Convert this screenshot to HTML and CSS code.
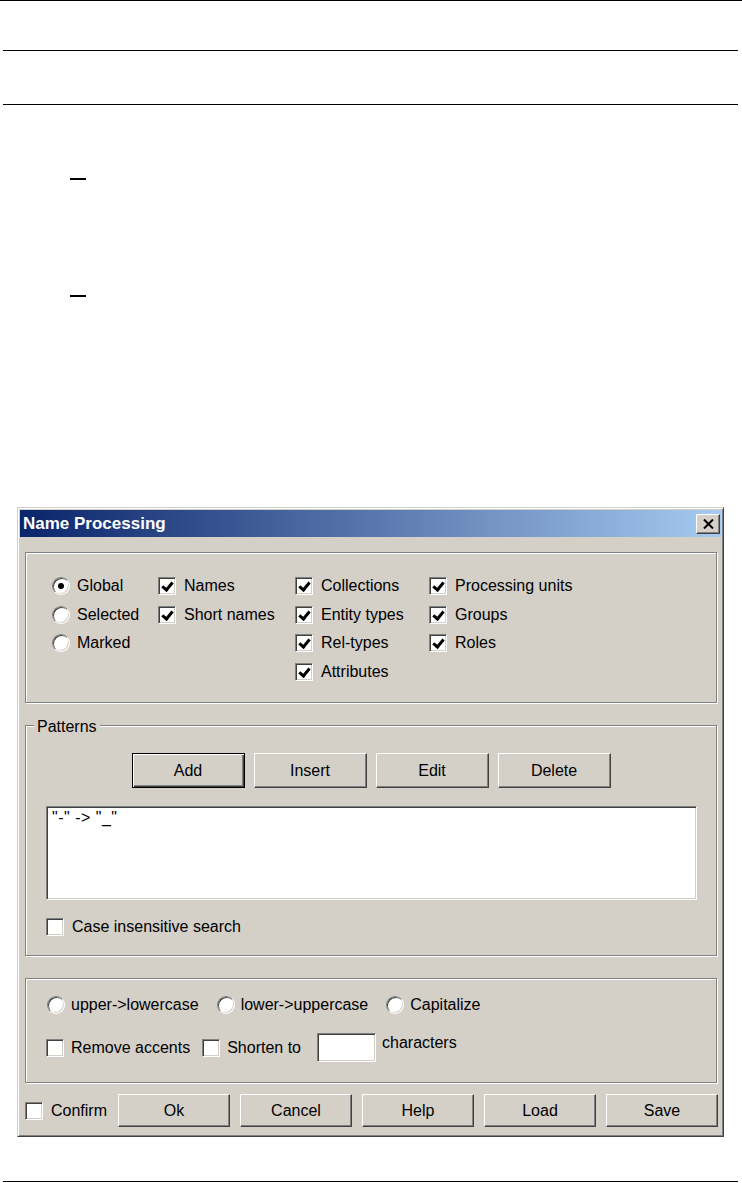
FILE: index.html
```html
<!DOCTYPE html>
<html lang="en">
<head>
  <meta charset="UTF-8" />
  <meta name="viewport" content="width=device-width, initial-scale=1.0" />
  <title>Name Processing</title>
  <link rel="stylesheet" href="styles.css">
</head>
<body>
<div class="rule full"></div>
<div class="rule r1"></div>
<div class="rule r2"></div>
<div class="mark m1"></div>
<div class="mark m2"></div>

<div class="dialog">
  <div class="titlebar">
    <span class="title">Name Processing</span>
    <span class="close">
      <svg width="11" height="10" viewBox="0 0 11 10"><path d="M1 0.5 L10 9.5 M10 0.5 L1 9.5" stroke="#000" stroke-width="2"/></svg>
    </span>
  </div>

  <div class="dlg-body">
    <div class="group scope">
      <div class="grid">
        <div class="opt"><span class="rb on"></span>Global</div>
        <div class="opt"><span class="cb on"></span>Names</div>
        <div class="opt"><span class="cb on"></span>Collections</div>
        <div class="opt"><span class="cb on"></span>Processing units</div>

        <div class="opt"><span class="rb"></span>Selected</div>
        <div class="opt"><span class="cb on"></span>Short names</div>
        <div class="opt"><span class="cb on"></span>Entity types</div>
        <div class="opt"><span class="cb on"></span>Groups</div>

        <div class="opt"><span class="rb"></span>Marked</div>
        <div></div>
        <div class="opt"><span class="cb on"></span>Rel-types</div>
        <div class="opt"><span class="cb on"></span>Roles</div>

        <div></div>
        <div></div>
        <div class="opt"><span class="cb on"></span>Attributes</div>
        <div></div>
      </div>
    </div>

    <div class="group patterns">
      <span class="legend">Patterns</span>
      <div class="btn-row">
        <span class="btn default">Add</span>
        <span class="btn">Insert</span>
        <span class="btn">Edit</span>
        <span class="btn">Delete</span>
      </div>
      <div class="listbox">"-" -&gt; "_"</div>
      <div class="opt case"><span class="cb"></span>Case insensitive search</div>
    </div>

    <div class="group transform">
      <div class="row">
        <div class="opt"><span class="rb"></span>upper-&gt;lowercase</div>
        <div class="opt"><span class="rb"></span>lower-&gt;uppercase</div>
        <div class="opt"><span class="rb"></span>Capitalize</div>
      </div>
      <div class="row row2">
        <div class="opt"><span class="cb"></span>Remove accents</div>
        <div class="opt"><span class="cb"></span>Shorten to</div>
        <span class="field"></span>
        <span class="unit">characters</span>
      </div>
    </div>

    <div class="footer">
      <div class="opt"><span class="cb"></span>Confirm</div>
      <div class="actions">
        <span class="btn">Ok</span>
        <span class="btn">Cancel</span>
        <span class="btn">Help</span>
        <span class="btn">Load</span>
        <span class="btn">Save</span>
      </div>
    </div>
  </div>
</div>

<div class="rule bottom"></div>
</body>
</html>
```

FILE: styles.css
```css
body {
  margin: 0;
  background: #fff;
  color: #000;
  font-family: "Liberation Sans", Arial, sans-serif;
  font-size: 16px;
}
.rule {
  height: 1px;
  background: #000;
  margin: 0 4px 0 3px;
}
.rule.full {
  margin: 0;
}
.r1 {
  margin-top: 49px;
}
.r2 {
  margin-top: 53px;
}
.bottom {
  margin-top: 44px;
}
.mark {
  width: 16px;
  height: 2px;
  background: #000;
  margin-left: 70px;
}
.m1 {
  margin-top: 73px;
}
.m2 {
  margin-top: 115px;
}

/* window */
.dialog {
  margin: 210px 0 0 17px;
  width: 707px;
  height: 630px;
  box-sizing: border-box;
  padding: 2px;
  background: #d4d0c8;
  border: 1px solid;
  border-color: #d4d0c8 #404040 #404040 #d4d0c8;
  box-shadow: inset 1px 1px #fff, inset -1px -1px #808080;
}
.titlebar {
  height: 27px;
  display: flex;
  align-items: center;
  justify-content: space-between;
  padding: 0 1px 0 3px;
  background: linear-gradient(to right, #0a246a, #a6caf0);
}
.title {
  color: #fff;
  font-weight: bold;
  font-size: 17px;
}
.close {
  width: 24px;
  height: 20px;
  box-sizing: border-box;
  display: flex;
  align-items: center;
  justify-content: center;
  background: #d4d0c8;
  border: 1px solid;
  border-color: #fff #404040 #404040 #fff;
  box-shadow: inset -1px -1px #808080;
}
.dlg-body {
  padding: 15px 4px 0 5px;
}

/* group boxes */
.group {
  position: relative;
  box-sizing: border-box;
  border: 1px solid #808080;
  box-shadow: inset 1px 1px #fff, 1px 1px #fff;
}
.legend {
  position: absolute;
  top: -8px;
  left: 8px;
  padding: 0 3px;
  line-height: 18px;
  background: #d4d0c8;
}
.scope {
  height: 151px;
  padding: 19px 0 0 26px;
}
.grid {
  display: grid;
  grid-template-columns: 106px 137px 134px auto;
  grid-auto-rows: 28.5px;
  align-items: center;
}
.opt {
  display: flex;
  align-items: center;
  gap: 8px;
  white-space: nowrap;
}

/* check boxes and radios */
.cb, .rb {
  position: relative;
  flex: none;
  width: 18px;
  height: 18px;
  box-sizing: border-box;
  background: #fff;
  border: 1px solid;
  border-color: #808080 #fff #fff #808080;
  box-shadow: inset 1px 1px #404040, inset -1px -1px #d4d0c8;
}
.rb {
  border-radius: 50%;
  margin-right: -1px;
}
.cb.on::after {
  content: "";
  position: absolute;
  left: 5px;
  top: 2px;
  width: 4px;
  height: 8px;
  border: solid #000;
  border-width: 0 3px 3px 0;
  transform: rotate(40deg);
}
.rb.on::after {
  content: "";
  position: absolute;
  left: 5px;
  top: 5px;
  width: 6px;
  height: 6px;
  border-radius: 50%;
  background: #000;
}

/* patterns */
.patterns {
  margin-top: 22px;
  height: 231px;
  padding-top: 27px;
}
.btn-row {
  display: flex;
  justify-content: center;
  gap: 9px;
}
.btn {
  width: 113px;
  height: 35px;
  box-sizing: border-box;
  display: flex;
  align-items: center;
  justify-content: center;
  background: #d4d0c8;
  border: 1px solid;
  border-color: #fff #404040 #404040 #fff;
  box-shadow: inset -1px -1px #808080;
}
.btn.default {
  border-color: #000;
  box-shadow: inset 1px 1px #fff, inset -1px -1px #404040, inset -2px -2px #808080;
}
.listbox {
  margin: 18px 19px 0 20px;
  height: 94px;
  box-sizing: border-box;
  padding: 2px 5px;
  line-height: 18px;
  letter-spacing: 0.5px;
  background: #fff;
  border: 1px solid;
  border-color: #808080 #fff #fff #808080;
  box-shadow: inset 1px 1px #404040, inset -1px -1px #d4d0c8;
}
.case {
  margin: 18px 0 0 20px;
}

/* case conversion */
.transform {
  margin-top: 22px;
  height: 105px;
  padding: 16px 0 0 21px;
}
.row {
  display: flex;
  align-items: center;
  gap: 18px;
  height: 20px;
}
.row .opt {
  gap: 7px;
}
.row2 {
  margin: 18px 0 0 -1px;
  height: 29px;
  gap: 12px;
}
.field {
  width: 59px;
  height: 29px;
  box-sizing: border-box;
  margin-left: 4px;
  background: #fff;
  border: 1px solid;
  border-color: #808080 #fff #fff #808080;
  box-shadow: inset 1px 1px #404040, inset -1px -1px #d4d0c8;
}
.unit {
  align-self: flex-start;
  margin: 1px 0 0 -6px;
  line-height: 18px;
}

/* bottom buttons */
.footer {
  display: flex;
  align-items: center;
  margin-top: 11px;
  height: 33px;
}
.actions {
  display: flex;
  gap: 10px;
  margin: 0 -1px 0 auto;
}
.actions .btn {
  width: 112px;
  height: 33px;
}
```
